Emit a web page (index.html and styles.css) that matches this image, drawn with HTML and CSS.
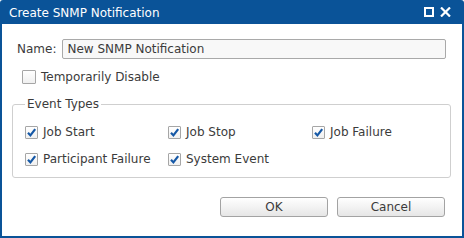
FILE: index.html
```html
<!DOCTYPE html>
<html lang="en">
<head>
    <meta charset="UTF-8">
    <title>Create SNMP Notification</title>
    <link rel="stylesheet" href="styles.css">
</head>
<body>
    <div class="window">
        <div class="titlebar">
            <span class="title">Create SNMP Notification</span>
            <div class="title-buttons">
                <svg width="10" height="10" viewBox="0 0 10 10"><rect x="1" y="1" width="8" height="8" fill="none" stroke="#fff" stroke-width="2"/></svg>
                <svg width="11" height="10" viewBox="0 0 11 10"><path d="M1 0.5 L10 9.5 M10 0.5 L1 9.5" stroke="#fff" stroke-width="2.2"/></svg>
            </div>
        </div>
        <div class="content">
            <div class="name-row">
                <label for="name">Name:</label>
                <input type="text" id="name" value="New SNMP Notification">
            </div>
            <label class="check disable-row">
                <span class="box"></span>
                Temporarily Disable
            </label>

            <fieldset>
                <legend>Event Types</legend>
                <div class="event-grid">
                    <label class="check"><span class="box checked"><svg width="13" height="13" viewBox="0 0 13 13"><path d="M3 6.8 L5.4 9.4 L10.2 3.2" fill="none" stroke="#1558a6" stroke-width="2.2"/></svg></span>Job Start</label>
                    <label class="check"><span class="box checked"><svg width="13" height="13" viewBox="0 0 13 13"><path d="M3 6.8 L5.4 9.4 L10.2 3.2" fill="none" stroke="#1558a6" stroke-width="2.2"/></svg></span>Job Stop</label>
                    <label class="check"><span class="box checked"><svg width="13" height="13" viewBox="0 0 13 13"><path d="M3 6.8 L5.4 9.4 L10.2 3.2" fill="none" stroke="#1558a6" stroke-width="2.2"/></svg></span>Job Failure</label>
                    <label class="check"><span class="box checked"><svg width="13" height="13" viewBox="0 0 13 13"><path d="M3 6.8 L5.4 9.4 L10.2 3.2" fill="none" stroke="#1558a6" stroke-width="2.2"/></svg></span>Participant Failure</label>
                    <label class="check"><span class="box checked"><svg width="13" height="13" viewBox="0 0 13 13"><path d="M3 6.8 L5.4 9.4 L10.2 3.2" fill="none" stroke="#1558a6" stroke-width="2.2"/></svg></span>System Event</label>
                </div>
            </fieldset>

            <div class="buttons">
                <button>OK</button>
                <button>Cancel</button>
            </div>
        </div>
    </div>
</body>
</html>
```

FILE: styles.css
```css
body {
    margin: 0;
    font-family: "DejaVu Sans", Verdana, sans-serif;
    font-size: 12px;
    color: #3b3b3b;
    background: #fff;
}
.window {
    width: 464px;
    height: 238px;
    box-sizing: border-box;
    background: #0a5398;
    padding: 0 2px 2px 2px;
    border-radius: 3px 3px 0 0;
    display: flex;
    flex-direction: column;
}
.titlebar {
    height: 24px;
    display: flex;
    align-items: center;
    justify-content: space-between;
    padding: 0 11px 0 7px;
    color: #fff;
}
.title {
    font-size: 12px;
    padding-top: 1px;
}
.title-buttons {
    display: flex;
    gap: 6px;
    align-items: center;
}
.content {
    flex: 1;
    background: #fff;
    padding: 15px 17px 0 15px;
}
.name-row {
    display: flex;
    align-items: center;
    gap: 6px;
}
.name-row input {
    flex: 1;
    height: 20px;
    box-sizing: border-box;
    margin: 0 -1px 0 0;
    border: 1px solid #a9a9a9;
    border-radius: 2px;
    background: #f8f8f8;
    padding: 0 4px;
    font-family: inherit;
    font-size: 12px;
    color: #3b3b3b;
}
.check {
    display: flex;
    align-items: center;
    gap: 5px;
    height: 14px;
}
.box {
    width: 13px;
    height: 13px;
    box-sizing: border-box;
    border: 1px solid #a6a6a6;
    border-radius: 1px;
    background: linear-gradient(#ffffff, #f0f0f0);
    position: relative;
    flex: none;
}
.box svg {
    position: absolute;
    left: -1px;
    top: -1px;
}
.disable-row {
    margin: 11px 0 0 5px;
}
.disable-row .box {
    width: 14px;
    height: 14px;
}
fieldset {
    margin: 13px 0 0 -5px;
    padding: 14px 12px 11px 12px;
    border: 1px solid #cfcfcf;
    border-radius: 3px;
    width: 439px;
    box-sizing: border-box;
}
legend {
    margin-left: 0;
    padding: 0 2px;
    line-height: 14px;
}
.event-grid {
    display: grid;
    grid-template-columns: 143px 144px auto;
    row-gap: 13px;
}
.buttons {
    display: flex;
    justify-content: flex-end;
    gap: 9px;
    margin-top: 19px;
}
.buttons button {
    width: 108px;
    height: 20px;
    border: 1px solid #a3a3a3;
    border-radius: 3px;
    background: linear-gradient(#ffffff, #e6e6e6);
    font-family: inherit;
    font-size: 12px;
    color: #3b3b3b;
    padding: 0;
}
```
